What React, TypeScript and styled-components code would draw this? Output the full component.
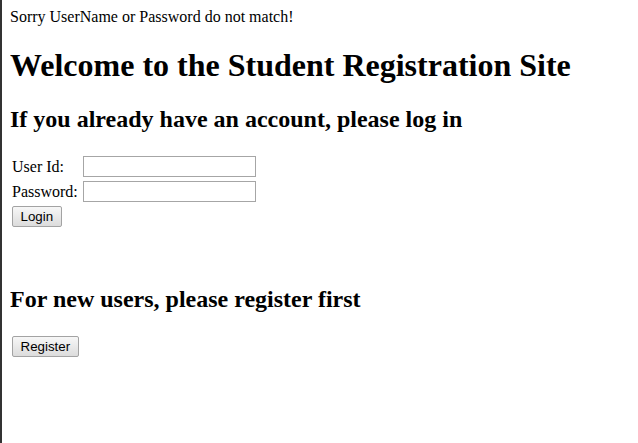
import React from "react";
import styled, { createGlobalStyle } from "styled-components";

const GlobalStyle = createGlobalStyle`
  html {
    height: 100%;
    box-sizing: border-box;
    border-left: 2px solid #333333;
    background: #ffffff;
  }
  body {
    margin: 8px;
    font-family: "Liberation Serif", "Times New Roman", serif;
    font-size: 16px;
    color: #000000;
    background: #ffffff;
  }
`;

const Message = styled.div`
  font-size: 16px;
  line-height: normal;
`;

const Title = styled.h1`
  font-size: 32px;
  font-weight: bold;
  margin: 21.44px 0;
`;

const Subtitle = styled.h2`
  font-size: 24px;
  font-weight: bold;
  margin: 19.92px 0;
`;

const LoginForm = styled.form`
  display: grid;
  grid-template-columns: 69px 173px;
  grid-auto-rows: 21px;
  column-gap: 2px;
  row-gap: 4px;
  align-items: center;
  justify-content: start;
  padding: 3.5px 2px 39px 2px;
  margin: 0;
`;

const Label = styled.label`
  font-size: 16px;
  line-height: 18px;
  white-space: nowrap;
`;

const TextInput = styled.input`
  box-sizing: border-box;
  width: 173px;
  height: 21px;
  margin: 0;
  padding: 1px 2px;
  border: 1px solid #a6a6a6;
  border-radius: 0;
  background: #ffffff;
  font-family: "Liberation Sans", Arial, sans-serif;
  font-size: 13.33px;
  outline: none;
`;

const ButtonCell = styled.div`
  grid-column: 1 / span 2;
  display: flex;
`;

const Button = styled.button`
  box-sizing: border-box;
  height: 21px;
  margin: 0;
  padding: 0 7.5px;
  border: 1px solid #a3a3a3;
  border-radius: 2px;
  background: linear-gradient(#f7f7f7, #dcdcdc);
  color: #000000;
  font-family: "Liberation Sans", Arial, sans-serif;
  font-size: 13.33px;
  line-height: 19px;
  cursor: default;
`;

const RegisterBar = styled.div`
  display: flex;
  padding: 2.5px 2px;
`;

export default function App() {
  return (
    <>
      <GlobalStyle />
      <Message>Sorry UserName or Password do not match!</Message>
      <Title>Welcome to the Student Registration Site</Title>
      <Subtitle>If you already have an account, please log in</Subtitle>
      <LoginForm onSubmit={(e) => e.preventDefault()}>
        <Label htmlFor="uid">User Id:</Label>
        <TextInput id="uid" type="text" />
        <Label htmlFor="pwd">Password:</Label>
        <TextInput id="pwd" type="password" />
        <ButtonCell>
          <Button type="submit">Login</Button>
        </ButtonCell>
      </LoginForm>
      <Subtitle>For new users, please register first</Subtitle>
      <RegisterBar>
        <Button type="button">Register</Button>
      </RegisterBar>
    </>
  );
}
